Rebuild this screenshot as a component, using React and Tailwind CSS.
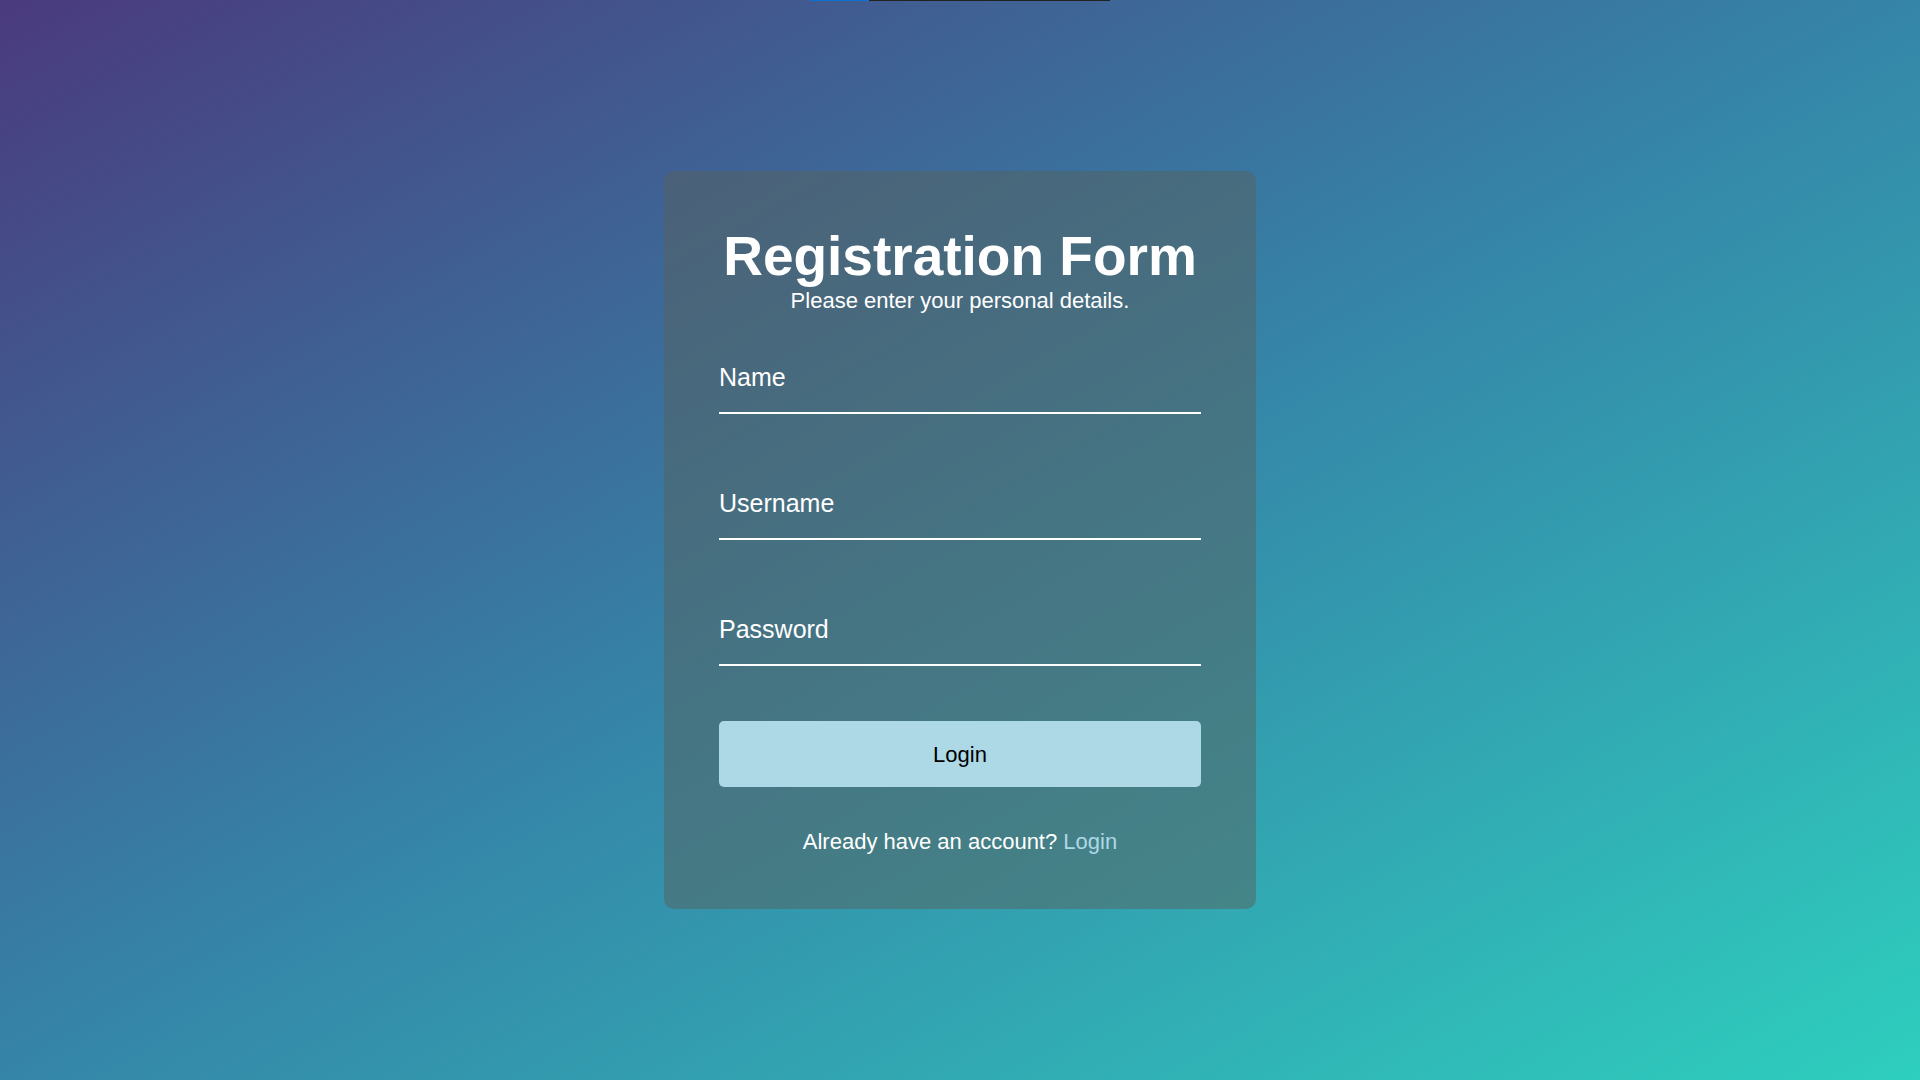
import React from 'react';

// Underlined text field with a white placeholder
const Field = ({ type = 'text', placeholder }) => {
  return (
    <input
      type={type}
      placeholder={placeholder}
      className="block w-full h-[50px] pb-[21px] pt-0 bg-transparent border-0 border-b-2 border-white text-[25px] leading-[27px] text-white placeholder:text-white outline-none"
    />
  );
};

export default function App() {
  return (
    <div className="relative min-h-screen w-full flex items-center justify-center bg-[linear-gradient(to_bottom_right,#4a3a7e_0%,#3585a8_50%,#2ecfbe_100%)] font-['Liberation_Sans',Arial,sans-serif]">
      {/* thin progress strip at the very top */}
      <div className="absolute top-0 left-[810px] flex h-px">
        <div className="w-[59px] bg-[#0b72d4]"></div>
        <div className="w-[241px] bg-[#222222]"></div>
      </div>

      <div className="w-[592px] rounded-[10px] bg-[rgba(85,97,94,0.5)] px-[55px] pt-[54px] pb-[55px]">
        <div className="text-center text-white">
          <h1 className="text-[55px] font-bold leading-[62px]">Registration Form</h1>
          <p className="mt-[1px] text-[22px] leading-[25px]">Please enter your personal details.</p>
        </div>

        <form className="mt-[51px]" onSubmit={(e) => e.preventDefault()}>
          <div className="flex flex-col gap-[76px]">
            <Field placeholder="Name" />
            <Field placeholder="Username" />
            <Field type="password" placeholder="Password" />
          </div>

          <button
            type="submit"
            className="mt-[55px] w-full h-[66px] rounded-[5px] bg-[#add8e6] text-[22px] text-black"
          >
            Login
          </button>
        </form>

        <p className="mt-[42px] text-center text-[22px] leading-[25px] text-white">
          Already have an account? <a href="#" className="text-[#add8e6]">Login</a>
        </p>
      </div>
    </div>
  );
}
